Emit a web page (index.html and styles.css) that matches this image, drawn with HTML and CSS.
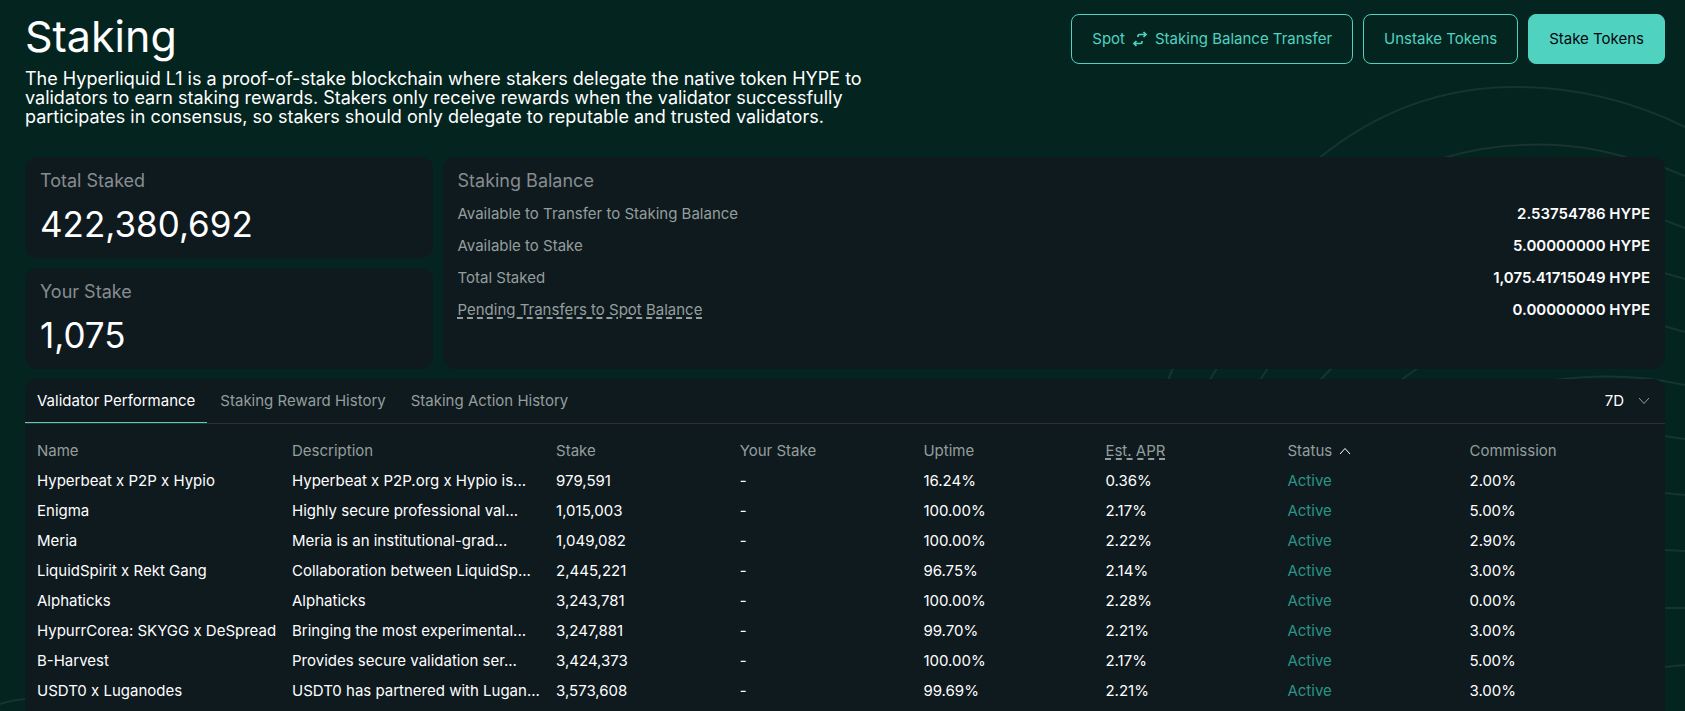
FILE: index.html
```html
<!DOCTYPE html>
<html lang="en">
<head>
<meta charset="utf-8">
<title>Staking</title>
<link rel="stylesheet" href="styles.css">
</head>
<body>
<svg class="backdrop" viewBox="0 0 1685 711" preserveAspectRatio="xMaxYMin slice" fill="none" aria-hidden="true">
  <path d="M1318 159C1378 110 1445 87 1515 87C1572 87 1630 100 1685 127"/>
  <path d="M1168 380L1173 368M1210 380L1217 368M1260 380L1268 368M1320 380L1332 368M1401 380L1418 368"/>
  <path d="M1440 159C1500 140 1570 140 1628 158L1665 168L1685 176"/>
  <path d="M1664 220L1685 228M1664 273L1685 279M1664 326L1685 332"/>
  <path d="M1555 380C1600 374 1640 375 1685 385"/>
  <path d="M1664 436L1685 439M1664 493L1685 495M1664 550L1685 551M1664 608L1685 608M1664 667L1685 665"/>
  <path d="M0 704Q12 700 26 699"/>
</svg>
<main class="page">
  <header class="top">
    <div class="intro">
      <h1 class="title">Staking</h1>
      <p class="lead">The Hyperliquid L1 is a proof-of-stake blockchain where stakers delegate the native token HYPE to validators to earn staking rewards. Stakers only receive rewards when the validator successfully participates in consensus, so stakers should only delegate to reputable and trusted validators.</p>
    </div>
    <div class="actions">
      <button class="btn" type="button">Spot
        <svg class="swap" viewBox="0 0 14 16" aria-hidden="true"><path d="M5 6V5Q5 3.500 6.500 3.500H13M10.500 1L13 3.500L10.500 6M9 10V11Q9 12.500 7.500 12.500H1M3.500 10L1 12.500L3.500 15" fill="none" stroke="currentColor" stroke-width="1.700"/></svg>
        Staking Balance Transfer</button>
      <button class="btn" type="button">Unstake Tokens</button>
      <button class="btn btn-primary" type="button">Stake Tokens</button>
    </div>
  </header>

  <section class="summary">
    <div class="stats">
      <div class="card">
        <h2 class="card-label">Total Staked</h2>
        <div class="figure">422,380,692</div>
      </div>
      <div class="card">
        <h2 class="card-label">Your Stake</h2>
        <div class="figure">1,075</div>
      </div>
    </div>
    <div class="card">
      <h2 class="card-label">Staking Balance</h2>
      <dl class="balances">
        <div class="balance"><dt>Available to Transfer to Staking Balance</dt><dd>2.53754786 HYPE</dd></div>
        <div class="balance"><dt>Available to Stake</dt><dd>5.00000000 HYPE</dd></div>
        <div class="balance"><dt>Total Staked</dt><dd>1,075.41715049 HYPE</dd></div>
        <div class="balance"><dt><span class="hint">Pending Transfers to Spot Balance</span></dt><dd>0.00000000 HYPE</dd></div>
      </dl>
    </div>
  </section>

  <section class="panel">
    <div class="tabbar">
      <div class="tabs" role="tablist">
        <button class="tab tab-active" type="button" role="tab" aria-selected="true">Validator Performance</button>
        <button class="tab" type="button" role="tab" aria-selected="false">Staking Reward History</button>
        <button class="tab" type="button" role="tab" aria-selected="false">Staking Action History</button>
      </div>
      <button class="period" type="button" aria-label="Period: 7D">7D
        <svg class="chevron" viewBox="0 0 12 8" aria-hidden="true"><path d="M1 1L6 6.500L11 1"/></svg>
      </button>
    </div>
    <table class="validators">
      <colgroup><col class="c-name"><col class="c-desc"><col class="c-stake"><col class="c-stake"><col class="c-rate"><col class="c-rate"><col class="c-rate"><col></colgroup>
      <thead>
        <tr><th>Name</th><th>Description</th><th>Stake</th><th>Your Stake</th><th>Uptime</th><th><span class="hint">Est. APR</span></th><th><span class="sorted">Status <svg class="chevron chevron-up" viewBox="0 0 12 8" aria-hidden="true"><path d="M1 7L6 1.500L11 7"/></svg></span></th><th>Commission</th></tr>
      </thead>
      <tbody>
        <tr><td>Hyperbeat x P2P x Hypio</td><td>Hyperbeat x P2P.org x Hypio is...</td><td>979,591</td><td>-</td><td>16.24%</td><td>0.36%</td><td class="active">Active</td><td>2.00%</td></tr>
        <tr><td>Enigma</td><td>Highly secure professional val...</td><td>1,015,003</td><td>-</td><td>100.00%</td><td>2.17%</td><td class="active">Active</td><td>5.00%</td></tr>
        <tr><td>Meria</td><td>Meria is an institutional-grad...</td><td>1,049,082</td><td>-</td><td>100.00%</td><td>2.22%</td><td class="active">Active</td><td>2.90%</td></tr>
        <tr><td>LiquidSpirit x Rekt Gang</td><td>Collaboration between LiquidSp...</td><td>2,445,221</td><td>-</td><td>96.75%</td><td>2.14%</td><td class="active">Active</td><td>3.00%</td></tr>
        <tr><td>Alphaticks</td><td>Alphaticks</td><td>3,243,781</td><td>-</td><td>100.00%</td><td>2.28%</td><td class="active">Active</td><td>0.00%</td></tr>
        <tr><td>HypurrCorea: SKYGG x DeSpread</td><td>Bringing the most experimental...</td><td>3,247,881</td><td>-</td><td>99.70%</td><td>2.21%</td><td class="active">Active</td><td>3.00%</td></tr>
        <tr><td>B-Harvest</td><td>Provides secure validation ser...</td><td>3,424,373</td><td>-</td><td>100.00%</td><td>2.17%</td><td class="active">Active</td><td>5.00%</td></tr>
        <tr><td>USDT0 x Luganodes</td><td>USDT0 has partnered with Lugan...</td><td>3,573,608</td><td>-</td><td>99.69%</td><td>2.21%</td><td class="active">Active</td><td>3.00%</td></tr>
      </tbody>
    </table>
  </section>
</main>
</body>
</html>
```
FILE: styles.css
```css
* { box-sizing: border-box; }

body {
  margin: 0;
  min-height: 100vh;
  background: #04251f;
  color: #fff;
  font: 400 15px/20px Inter, "Liberation Sans", sans-serif;
  overflow: hidden;
}

h1, h2, p, dl, dd { margin: 0; font-weight: 400; }

button {
  border: 0;
  background: none;
  color: inherit;
  font: inherit;
  cursor: pointer;
}

.backdrop {
  position: absolute;
  inset: 0;
  width: 100%;
  height: 100%;
  z-index: -1;
  stroke: #15352e;
  stroke-width: 2;
}

.page { padding: 14px 20px 0 25px; }

.top {
  display: flex;
  justify-content: space-between;
  align-items: flex-start;
}

.title { font-size: 43px; line-height: 44px; }

.lead {
  max-width: 850px;
  margin-top: 11px;
  font-size: 18px;
  line-height: 19px;
}

.actions { display: flex; gap: 10px; }

.btn {
  display: flex;
  align-items: center;
  gap: 8px;
  height: 50px;
  padding: 0 20px;
  border: 1px solid #50d2c1;
  border-radius: 8px;
  color: #50d2c1;
  white-space: nowrap;
}

.btn-primary { background: #50d2c1; color: #04060c; }

.swap { width: 14px; height: 16px; }

.summary {
  display: grid;
  grid-template-columns: 1fr 3fr;
  gap: 10px;
  margin-top: 31px;
}

.stats { display: grid; gap: 10px; }

.card {
  padding: 12px 15px;
  border-radius: 12px;
  background: #0f1a1f;
}

.card-label { color: #878c8f; font-size: 18px; line-height: 24px; }

.figure { margin-top: 9px; font-size: 35px; line-height: 44px; }

.balances { margin-top: 11px; }

.balance { display: flex; justify-content: space-between; margin-bottom: 12px; }

.balance dt { color: #949e9c; }

.balance dd { font-weight: 600; }

.hint {
  text-decoration: underline dashed;
  text-underline-offset: 2px;
  text-decoration-thickness: 2px;
}

.panel {
  margin-top: 10px;
  padding-bottom: 12px;
  border-radius: 12px 12px 0 0;
  background: #0f1a1f;
}

.tabbar {
  display: flex;
  justify-content: space-between;
  border-bottom: 1px solid #303030;
}

.tabs { display: flex; gap: 1px; }

.tab {
  height: 44px;
  padding: 0 12px;
  border-bottom: 1px solid transparent;
  color: #949e9c;
}

.tab-active { border-color: #50d2c1; color: #fff; }

.period { display: flex; align-items: center; gap: 14px; padding: 0 15px; }

.chevron {
  width: 12px;
  height: 8px;
  fill: none;
  stroke: #949e9c;
}

.chevron-up { stroke: #fff; }

.validators {
  width: 100%;
  margin-top: 12px;
  border-collapse: collapse;
  table-layout: fixed;
}

.validators th, .validators td {
  height: 30px;
  padding: 0 0 0 12px;
  font-weight: 400;
  text-align: left;
  white-space: nowrap;
}

.validators th { color: #949e9c; }

.validators .active { color: #2a9485; }

.sorted { display: flex; align-items: center; gap: 7px; }

.c-name { width: 15.55%; }
.c-desc { width: 16.1%; }
.c-stake { width: 11.2%; }
.c-rate { width: 11.1%; }
```
